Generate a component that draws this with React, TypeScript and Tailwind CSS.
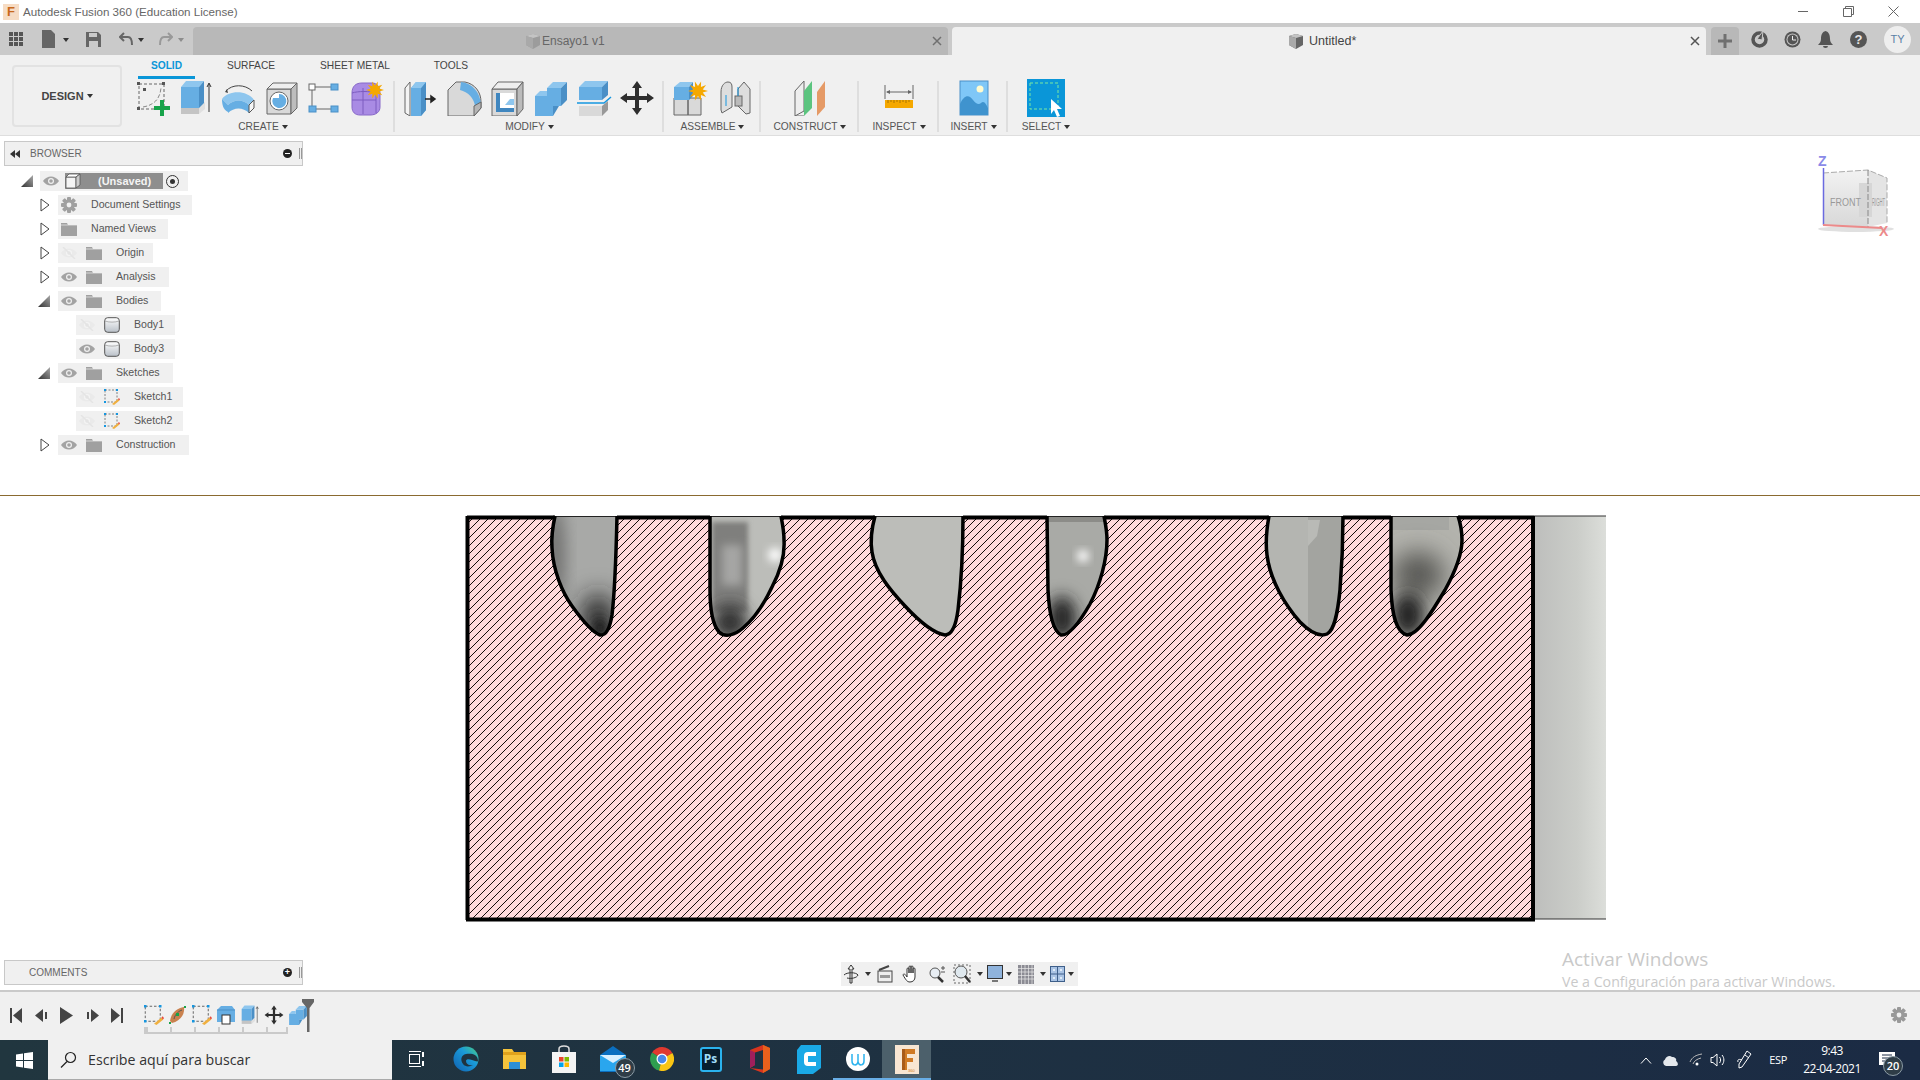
import type { ReactNode } from 'react';

const S = ({ s = 36, children }: { s?: number; children: ReactNode }) => (
  <svg width={s} height={s} viewBox="0 0 36 36" className="shrink-0">
    {children}
  </svg>
);

const B1 = '#66aee3';
const B2 = '#8ec6ee';
const B3 = '#4a8fc6';
const G1 = '#d9d9d9';
const LN = '#666';

/* ---------- ribbon icons ---------- */
const SketchIcon = ({ s = 36 }: { s?: number }) => (
  <S s={s}>
    <rect x="4" y="4" width="25" height="25" fill="none" stroke={LN} strokeWidth="1" strokeDasharray="3 2" />
    <path d="M8 27 C 20 25 25 18 26 8" fill="none" stroke="#888" strokeWidth="1" strokeDasharray="4 2" />
    {[[2, 2], [27, 2], [2, 27], [27, 27], [8, 8]].map(([x, y]) => (
      <rect key={`${x}-${y}`} x={x} y={y} width="3" height="3" fill="#555" />
    ))}
    <path d="M25 20h4v6h6v4h-6v6h-4v-6h-6v-4h6z" fill="#17a34a" />
  </S>
);
const ExtrudeIcon = ({ s = 36 }: { s?: number }) => (
  <S s={s}>
    <path d="M3 27V34H21V27z" fill="#c4c4c4" />
    <path d="M21 27 27 22V29L21 34z" fill="#e0e0e0" />
    <path d="M3 7V28H21V7z" fill={B1} />
    <path d="M3 7 8 1H26L21 7z" fill={B2} />
    <path d="M21 7 26 1V23L21 28z" fill={B3} />
    <path d="M31 32V4M29 7l2-4 2 4" fill="none" stroke="#333" strokeWidth="1" />
  </S>
);
const RevolveIcon = () => (
  <S>
    <path d="M5 11C11 4 24 4 31 11" fill="none" stroke="#444" strokeWidth="1" />
    <path d="M4 12l2-3 1 4z" fill="#444" />
    <path d="M1 19C8 10 26 10 33 20L28 25C22 19 13 19 7 25z" fill={B2} />
    <path d="M1 19C1 24 2 30 7 32V25z" fill={B1} />
    <path d="M7 25C13 19 22 19 28 25V33C22 27 13 27 7 33z" fill={B1} />
    <path d="M28 25 33 20V28L28 33z" fill="#f5f5f5" stroke="#555" strokeWidth="1" />
  </S>
);
const HoleIcon = () => (
  <S>
    <path d="M3 9V34H27V9z" fill={G1} stroke={LN} />
    <path d="M3 9 9 3H33L27 9z" fill="#efefef" stroke={LN} />
    <path d="M27 9 33 3V28L27 34z" fill="#bdbdbd" stroke={LN} />
    <circle cx="15" cy="21" r="9" fill="#fff" stroke={LN} />
    <path d="M15 14a7 7 0 1 1-6 4l6 0z" fill={B1} />
  </S>
);
const PatternIcon = () => (
  <S>
    <path d="M8 7H24M5 10V26M8 29H24" stroke={LN} strokeWidth="1" />
    <rect x="2" y="4" width="6" height="6" fill="#fff" stroke={LN} />
    <rect x="24" y="4" width="7" height="6" fill={B1} stroke={B3} />
    <rect x="2" y="26" width="7" height="6" fill={B1} stroke={B3} />
    <rect x="24" y="26" width="7" height="6" fill={B1} stroke={B3} />
  </S>
);
const StarBurst = ({ x, y, r = 8 }: { x: number; y: number; r?: number }) => {
  const pts: string[] = [];
  for (let i = 0; i < 20; i++) {
    const a = (i * Math.PI) / 10;
    const d = i % 2 ? r * 0.5 : r;
    pts.push(`${x + Math.cos(a) * d},${y + Math.sin(a) * d}`);
  }
  return <polygon points={pts.join(' ')} fill="#f5a800" />;
};
const FormIcon = () => (
  <S>
    <path d="M2 13C2 6 6 3 12 3H22C28 3 30 8 30 14V27C30 32 26 35 20 35H10C5 35 2 32 2 27z" fill="#a98be4" stroke="#8768c8" />
    <path d="M2 20H26M13 8V34M2 13C8 11 20 11 26 13M26 13V33" fill="none" stroke="#7c5cc0" strokeWidth="1" />
    <StarBurst x={25} y={10} r={9} />
  </S>
);
const PressPullIcon = () => (
  <S>
    <path d="M1 8 6 2V36L1 33z" fill="#f4f4f4" stroke={LN} />
    <path d="M7 8 12 2H22V30L17 36H7z" fill={B1} />
    <path d="M17 36V8L22 2V30z" fill={B3} />
    <path d="M7 8H17L22 2H12z" fill={B2} />
    <path d="M21 19H30M27 16l4 3-4 3z" stroke="#222" strokeWidth="1.5" fill="#222" />
  </S>
);
const FilletIcon = () => (
  <S>
    <path d="M1 36V10L9 2H18C28 4 34 12 34 22V28L27 36z" fill={G1} stroke={LN} />
    <path d="M14 2C25 3 33 12 34 24L28 26C27 18 21 12 13 10z" fill={B1} />
    <path d="M27 36V26L34 22V28z" fill="#b5b5b5" stroke={LN} />
  </S>
);
const ShellIcon = () => (
  <S>
    <path d="M2 9V36H27V9z" fill={G1} stroke={LN} />
    <path d="M2 9 8 2H33L27 9z" fill="#eee" stroke={LN} />
    <path d="M27 9 33 2V29L27 36z" fill="#bbb" stroke={LN} />
    <path d="M6 13H24V32H6z" fill="#fff" />
    <path d="M15 25 20 19H24V25z" fill={B2} />
    <path d="M6 13h4v15h14v4H6z" fill="#3f86bf" />
  </S>
);
const CombineIcon = ({ s = 36 }: { s?: number }) => (
  <S s={s}>
    <path d="M2 16V36H20V26H28V8H14V16z" fill={B1} />
    <path d="M14 8 20 2H34L28 8z" fill={B2} />
    <path d="M2 16 7 11H14V16z" fill={B2} />
    <path d="M28 8 34 2V20L28 26zM20 26 26 26 20 36z" fill={B3} />
  </S>
);
const SplitIcon = () => (
  <S>
    <path d="M3 7V20H26V7z" fill={B1} />
    <path d="M3 7 9 1H32L26 7z" fill={B2} />
    <path d="M26 7 32 1V15L26 20z" fill={B3} />
    <path d="M1 23H28L35 17" fill="none" stroke="#1596e0" strokeWidth="1.5" />
    <path d="M3 26V36H26V26z" fill={G1} />
    <path d="M26 26 32 21V30L26 36z" fill="#999" />
  </S>
);
const MoveIcon = ({ s = 36 }: { s?: number }) => (
  <S s={s}>
    <path d="M18 1 23 8H20V16H28V13L35 18 28 23V20H20V28H23L18 35 13 28H16V20H8V23L1 18 8 13V16H16V8H13z" fill="#2e2e2e" />
  </S>
);
const AssembleIcon = () => (
  <S>
    <path d="M1 18V35H15V18zM15 18V35H28V18z" fill={G1} stroke={LN} />
    <path d="M1 7V20H16V7z" fill={B1} />
    <path d="M1 7 7 2H20L16 7z" fill={B2} />
    <path d="M16 20V7L20 2V16z" fill={B3} />
    <StarBurst x={25} y={11} r={10} />
  </S>
);
const JointIcon = () => (
  <S>
    <path d="M4 12C4 5 8 2 11 2C14 2 15 4 15 7V27L5 33 4 30z" fill="#dedede" stroke={LN} />
    <path d="M21 9 27 2 33 9V33L29 34 21 26z" fill="#dedede" stroke={LN} />
    <rect x="18" y="16" width="7" height="10" fill="#bbb" stroke={LN} />
    <path d="M21 7V16M9 15V26" stroke="#1596e0" strokeWidth="1" />
  </S>
);
const ConstructIcon = () => (
  <S>
    <path d="M3 11 12 1V31L3 36z" fill="#eee" stroke={LN} />
    <path d="M12 36 3 36" stroke={LN} />
    <path d="M12 36V11L20 1V28z" fill="#5cc47f" />
    <path d="M25 12 33 1V27L25 36z" fill="#e59a66" />
  </S>
);
const InspectIcon = () => (
  <S>
    <path d="M4 5V19M32 5V19M6 12H30" stroke={LN} strokeWidth="1" fill="none" />
    <path d="M5 12l4-2v4zM31 12l-4-2v4z" fill={LN} />
    <rect x="4" y="20" width="28" height="8" fill="#f5a800" />
    <path d="M7 20v3M10 20v2M13 20v3M16 20v2M19 20v3M22 20v2M25 20v3M28 20v2" stroke="#8a6000" strokeWidth=".7" />
  </S>
);
const InsertIcon = () => (
  <svg width="30" height="36" viewBox="0 0 30 36" className="shrink-0">
    <rect x="1" y="1" width="28" height="34" fill="#7fc7f7" stroke="#4a90c8" />
    <circle cx="21" cy="9" r="3.5" fill="#fffbd0" />
    <path d="M1 35V24C5 15 10 14 14 20C17 24 20 25 22 23C25 20 27 24 29 28V35z" fill="#3f93ce" />
  </svg>
);
const SelectIcon = () => (
  <svg width="38" height="38" viewBox="0 0 38 38" className="shrink-0">
    <rect width="38" height="38" fill="#0a96d8" />
    <rect x="3" y="4" width="28" height="26" fill="none" stroke="#7de8a0" strokeWidth="1" strokeDasharray="3 2" />
    <path d="M24 20V35L27 31 30 38 33 37 30 30 35 30z" fill="#fff" />
  </svg>
);

/* ---------- browser icons ---------- */
const Eye = ({ off }: { off?: boolean }) => (
  <svg width="16" height="12" viewBox="0 0 16 12" className="shrink-0">
    <path d="M0 6C4 0 12 0 16 6C12 12 4 12 0 6z" fill={off ? '#eaeaea' : '#a3a3a3'} />
    <circle cx="8" cy="6" r="3" fill={off ? '#f4f4f4' : '#f0f0f0'} />
    <circle cx="8" cy="6" r="1.8" fill={off ? '#e4e4e4' : '#a3a3a3'} />
    {off && <path d="M2 0 14 12" stroke="#e4e4e4" strokeWidth="1.5" />}
  </svg>
);
const Folder = () => (
  <svg width="16" height="14" viewBox="0 0 16 14" className="shrink-0">
    <path d="M0 1H6L7 3H16V14H0z" fill="#a0a0a0" />
    <path d="M0 3H16" stroke="#eee" strokeWidth=".7" />
  </svg>
);
const Gear = ({ s = 16, c = '#a0a0a0' }: { s?: number; c?: string }) => (
  <svg width={s} height={s} viewBox="0 0 16 16" className="shrink-0">
    <g fill={c}>
      {[0, 45, 90, 135].map((a) => (
        <rect key={a} x="6" y="0" width="4" height="16" rx="1" transform={`rotate(${a} 8 8)`} />
      ))}
      <circle cx="8" cy="8" r="5.6" />
    </g>
    <circle cx="8" cy="8" r="2.4" fill="#f0f0f0" />
  </svg>
);
const BodyIcon = () => (
  <svg width="16" height="16" viewBox="0 0 16 16" className="shrink-0">
    <defs>
      <linearGradient id="bodyG" x1="0" x2="0" y1="0" y2="1">
        <stop offset="0" stopColor="#fff" />
        <stop offset="1" stopColor="#b9c0c8" />
      </linearGradient>
    </defs>
    <rect x=".7" y=".7" width="14.6" height="14.6" rx="3" fill="url(#bodyG)" stroke="#555" />
    <path d="M1 4C5 5.5 11 5.5 15 4" fill="none" stroke="#888" strokeWidth=".6" />
  </svg>
);
const SketchSmall = ({ s = 16 }: { s?: number }) => (
  <svg width={s} height={s} viewBox="0 0 16 16" className="shrink-0">
    <rect x="1" y="1" width="12" height="12" fill="none" stroke="#666" strokeWidth=".8" strokeDasharray="2 1.5" />
    {[[0, 0], [12, 0], [0, 12]].map(([x, y]) => (
      <rect key={`${x}${y}`} x={x} y={y} width="2" height="2" fill="#1596e0" />
    ))}
    <path d="M8 15 14 10l1.5 1.5L10 16z" fill="#f0b040" />
    <path d="M14 10l1-1 1 1.500-1 1z" fill="#e8483c" />
  </svg>
);
const TriRight = () => (
  <svg width="10" height="14" viewBox="0 0 10 14" className="shrink-0">
    <path d="M1 1 9 7 1 13z" fill="#fff" stroke="#444" strokeWidth="1" />
  </svg>
);
const TriDown = () => (
  <svg width="12" height="12" viewBox="0 0 12 12" className="shrink-0">
    <defs>
      <linearGradient id="triG" x1="0" x2="1" y1="1" y2="0">
        <stop offset="0" stopColor="#333" />
        <stop offset="1" stopColor="#aaa" />
      </linearGradient>
    </defs>
    <path d="M0 12 12 0V12z" fill="url(#triG)" />
  </svg>
);

type Row = {
  label: string;
  tri?: 'open' | 'closed';
  eye?: 'on' | 'off';
  icon: ReactNode;
  level: 1 | 2;
  width: string;
};

const rows: Row[] = [
  { label: 'Document Settings', tri: 'closed', icon: <Gear />, level: 1, width: 'w-[134px]' },
  { label: 'Named Views', tri: 'closed', icon: <Folder />, level: 1, width: 'w-[110px]' },
  { label: 'Origin', tri: 'closed', eye: 'off', icon: <Folder />, level: 1, width: 'w-[95px]' },
  { label: 'Analysis', tri: 'closed', eye: 'on', icon: <Folder />, level: 1, width: 'w-[111px]' },
  { label: 'Bodies', tri: 'open', eye: 'on', icon: <Folder />, level: 1, width: 'w-[103px]' },
  { label: 'Body1', eye: 'off', icon: <BodyIcon />, level: 2, width: 'w-[99px]' },
  { label: 'Body3', eye: 'on', icon: <BodyIcon />, level: 2, width: 'w-[99px]' },
  { label: 'Sketches', tri: 'open', eye: 'on', icon: <Folder />, level: 1, width: 'w-[115px]' },
  { label: 'Sketch1', eye: 'off', icon: <SketchSmall />, level: 2, width: 'w-[107px]' },
  { label: 'Sketch2', eye: 'off', icon: <SketchSmall />, level: 2, width: 'w-[107px]' },
  { label: 'Construction', tri: 'closed', eye: 'on', icon: <Folder />, level: 1, width: 'w-[131px]' },
];

function TreeRow({ row }: { row: Row }) {
  return (
    <div className="flex h-[24px] items-center">
      <div className={row.level === 1 ? 'flex w-[54px] justify-end pr-[8px]' : 'w-[72px]'}>
        {row.tri === 'closed' && <TriRight />}
        {row.tri === 'open' && <TriDown />}
      </div>
      <div className={`flex h-[20px] items-center bg-[#f0f0f0] pl-[3px] ${row.width}`}>
        {row.eye && (
          <div className="mr-[9px]">
            <Eye off={row.eye === 'off'} />
          </div>
        )}
        <div className="flex w-[16px] justify-center">{row.icon}</div>
        <span className="ml-[14px] whitespace-nowrap text-[10.6px] text-[#555]">{row.label}</span>
      </div>
    </div>
  );
}

function PanelHandle() {
  return <span className="h-[11px] w-[3px] border-x border-[#999]" />;
}

function BrowserPanel() {
  return (
    <div className="absolute left-[4px] top-[5px] w-[299px]">
      <div className="flex h-[25px] items-center border border-[#c8c8c8] bg-[#f0f0f0] pl-[5px]">
        <svg width="10" height="8" viewBox="0 0 10 8">
          <path d="M5 0V8L0 4zM10 0V8L5 4z" fill="#333" />
        </svg>
        <span className="ml-[10px] text-[10px] text-[#666]">BROWSER</span>
        <span className="ml-auto mr-[7px] flex h-[9px] w-[9px] items-center justify-center rounded-full bg-[#222]">
          <span className="h-[1.500px] w-[5px] bg-white" />
        </span>
        <PanelHandle />
      </div>
      <div className="mt-[3px] flex h-[24px] items-center">
        <div className="flex w-[36px] justify-end pr-[7px]">
          <TriDown />
        </div>
        <div className="flex h-[20px] w-[148px] items-center bg-[#f0f0f0] pl-[3px]">
          <Eye />
          <div className="ml-[6px] flex h-[16px] w-[98px] items-center bg-[#8e8e8e]">
            <svg width="16" height="16" viewBox="0 0 16 16" className="shrink-0">
              <path d="M1 4V15H11V4z" fill="#f4f4f4" stroke="#555" strokeWidth=".8" />
              <path d="M1 4 4 1H15L11 4z" fill="#fff" stroke="#555" strokeWidth=".8" />
              <path d="M11 4 15 1V12L11 15z" fill="#ccc" stroke="#555" strokeWidth=".8" />
            </svg>
            <span className="ml-[17px] text-[11px] font-bold text-[#f4f4f4]">(Unsaved)</span>
          </div>
          <span className="ml-[3px] flex h-[13px] w-[13px] items-center justify-center rounded-full border border-[#333]">
            <span className="h-[5px] w-[5px] rounded-full bg-[#333]" />
          </span>
        </div>
      </div>
      {rows.map((r) => (
        <TreeRow key={r.label} row={r} />
      ))}
    </div>
  );
}

/* ---------- ribbon ---------- */
function Caret() {
  return <span className="ml-[3px] inline-block border-x-[3px] border-t-[4px] border-x-transparent border-t-[#333] align-middle" />;
}

function Group({ width, label, icons, pad, last }: { width: string; label: string; icons: ReactNode; pad: string; last?: boolean }) {
  return (
    <div className={`relative flex h-[56px] flex-col ${width}`}>
      <div className={`flex h-[38px] items-center ${pad}`}>{icons}</div>
      <div className="mt-[2px] whitespace-nowrap text-center text-[10.2px] leading-[16px] text-[#555]">
        {label}
        <Caret />
      </div>
      {!last && <span className="absolute bottom-[3px] right-0 top-[2px] w-[2px] bg-[#dedede]" />}
    </div>
  );
}

const Slot = ({ w = 'w-[43px]', children }: { w?: string; children: ReactNode }) => (
  <div className={`flex justify-center ${w}`}>{children}</div>
);

function Ribbon() {
  return (
    <div className="flex h-[81px] border-b border-[#dedede] bg-[#f0f0f0]">
      <div className="w-[131px] pl-[12px] pt-[10px]">
        <div className="flex h-[62px] w-[110px] items-center justify-center rounded-[4px] border-2 border-[#e2e2e2] text-[11px] font-bold text-[#444]">
          DESIGN
          <Caret />
        </div>
      </div>
      <div className="flex flex-col">
        <div className="flex h-[24px] text-[10.2px] text-[#444]">
          <div className="ml-[7px] flex h-[24px] w-[57px] items-center justify-center border-b-[3px] border-[#0a96d8] pt-[1px] font-bold text-[#0a96d8]">
            SOLID
          </div>
          <div className="flex w-[112px] items-center justify-center pb-[2px]">SURFACE</div>
          <div className="flex w-[96px] items-center justify-center pb-[2px]">SHEET METAL</div>
          <div className="flex w-[96px] items-center justify-center pb-[2px]">TOOLS</div>
        </div>
        <div className="flex">
          <Group
            width="w-[264px]"
            label="CREATE"
            pad=""
            icons={
              <>
                <Slot><SketchIcon /></Slot>
                <Slot><ExtrudeIcon /></Slot>
                <Slot><RevolveIcon /></Slot>
                <Slot><HoleIcon /></Slot>
                <Slot><PatternIcon /></Slot>
                <Slot><FormIcon /></Slot>
              </>
            }
          />
          <Group
            width="w-[269px]"
            label="MODIFY"
            pad="pl-[5px]"
            icons={
              <>
                <Slot><PressPullIcon /></Slot>
                <Slot><FilletIcon /></Slot>
                <Slot><ShellIcon /></Slot>
                <Slot><CombineIcon /></Slot>
                <Slot><SplitIcon /></Slot>
                <Slot><MoveIcon /></Slot>
              </>
            }
          />
          <Group
            width="w-[97px]"
            label="ASSEMBLE"
            pad="pl-[4px]"
            icons={
              <>
                <Slot w="w-[45px]"><AssembleIcon /></Slot>
                <Slot w="w-[43px]"><JointIcon /></Slot>
              </>
            }
          />
          <Group width="w-[98px]" label="CONSTRUCT" pad="justify-center" icons={<ConstructIcon />} />
          <Group width="w-[80px]" label="INSPECT" pad="justify-center" icons={<InspectIcon />} />
          <Group width="w-[69px]" label="INSERT" pad="justify-center" icons={<InsertIcon />} />
          <Group width="w-[76px]" label="SELECT" pad="justify-center" icons={<SelectIcon />} last />
        </div>
      </div>
    </div>
  );
}

/* ---------- tab bar ---------- */
const DocCube = ({ c = '#8a8a8a' }: { c?: string }) => (
  <svg width="16" height="16" viewBox="0 0 16 16" className="shrink-0">
    <path d="M1 3 8 1 15 3V12L8 16 1 12z" fill={c} />
    <path d="M1 3 8 5 15 3 8 1z" fill="#c4c4c4" />
    <path d="M8 5V16L1 12V3z" fill="#a9a9a9" />
  </svg>
);
const TabX = ({ c }: { c: string }) => (
  <svg width="10" height="10" viewBox="0 0 10 10" className="shrink-0">
    <path d="M1 1 9 9M9 1 1 9" stroke={c} strokeWidth="1.500" />
  </svg>
);

function TabBar() {
  return (
    <div className="flex h-[32px] bg-[#cacaca] pt-[4px]">
      <div className="flex w-[193px] items-center">
        <svg width="14" height="14" viewBox="0 0 14 14" className="ml-[9px] mt-[-4px]">
          <g fill="#555">
            {[0, 5, 10].flatMap((x) => [0, 5, 10].map((y) => <rect key={`${x}${y}`} x={x} y={y} width="4" height="4" />))}
          </g>
        </svg>
        <svg width="14" height="18" viewBox="0 0 14 18" className="ml-[19px] mt-[-4px]">
          <path d="M0 0H9L13 4V18H0z" fill="#666" />
        </svg>
        <span className="ml-[4px] mt-[-4px]"><Caret /></span>
        <svg width="15" height="15" viewBox="0 0 15 15" className="ml-[17px] mt-[-4px]">
          <path d="M0 0H12L15 3V15H0z" fill="#666" />
          <rect x="3" y="1" width="8" height="4" fill="#cacaca" />
          <rect x="3" y="9" width="9" height="6" fill="#cacaca" />
        </svg>
        <svg width="14" height="14" viewBox="0 0 14 14" className="ml-[18px] mt-[-4px]">
          <path d="M5 1 1 5l4 4M1 5H9C12 5 13 8 13 13" fill="none" stroke="#666" strokeWidth="2" />
        </svg>
        <span className="ml-[2px] mt-[-4px]"><Caret /></span>
        <svg width="14" height="14" viewBox="0 0 14 14" className="ml-[15px] mt-[-4px]">
          <path d="M9 1l4 4-4 4M13 5H5C2 5 1 8 1 13" fill="none" stroke="#999" strokeWidth="2" />
        </svg>
        <span className="ml-[2px] mt-[-4px] opacity-40"><Caret /></span>
      </div>
      <div className="flex w-[755px] items-center rounded-t-[4px] bg-[#b8b8b8] pl-[332px] pr-[6px]">
        <DocCube c="#9c9c9c" />
        <span className="ml-[1px] text-[12px] text-[#666]">Ensayo1 v1</span>
        <span className="ml-auto">
          <TabX c="#707070" />
        </span>
      </div>
      <div className="ml-[4px] flex w-[754px] items-center rounded-t-[4px] bg-[#f0f0f0] pl-[336px] pr-[6px]">
        <DocCube c="#666" />
        <span className="ml-[5px] text-[12.500px] text-[#444]">Untitled*</span>
        <span className="ml-auto">
          <TabX c="#555" />
        </span>
      </div>
      <div className="ml-[5px] flex w-[28px] items-center justify-center rounded-t-[4px] bg-[#b8b8b8]">
        <svg width="14" height="14" viewBox="0 0 14 14">
          <path d="M5.500 0h3v5.500H14v3H8.500V14h-3V8.500H0v-3h5.500z" fill="#707070" />
        </svg>
      </div>
      <div className="flex flex-1 items-center pb-[4px]">
        <svg width="17" height="17" viewBox="0 0 17 17" className="ml-[12px]">
          <circle cx="8.500" cy="8.500" r="6.500" fill="none" stroke="#555" strokeWidth="3.500" />
          <path d="M12 0 6 8l5 1z" fill="#555" stroke="#cacaca" strokeWidth="1" />
        </svg>
        <svg width="17" height="17" viewBox="0 0 17 17" className="ml-[16px]">
          <circle cx="8.500" cy="8.500" r="8" fill="#555" />
          <circle cx="8.500" cy="8.500" r="6" fill="#cacaca" />
          <circle cx="8.500" cy="8.500" r="5" fill="#555" />
          <path d="M8.500 5V9H12" fill="none" stroke="#eee" strokeWidth="1" />
        </svg>
        <svg width="15" height="17" viewBox="0 0 15 17" className="ml-[17px]">
          <path d="M7.500 0C11 1 12 4 12 8C12 11 13.500 12 15 14H0C1.500 12 3 11 3 8C3 4 4 1 7.500 0z" fill="#555" />
          <path d="M5 15h5a2.500 2 0 0 1-5 0z" fill="#555" />
        </svg>
        <span className="ml-[17px] flex h-[17px] w-[17px] items-center justify-center rounded-full bg-[#555] text-[13px] font-bold leading-none text-[#e6e6e6]">?</span>
        <span className="ml-[17px] flex h-[27px] w-[27px] items-center justify-center rounded-full bg-[#eeeeee] text-[11px] text-[#5b7fa6]">TY</span>
      </div>
    </div>
  );
}

/* ---------- canvas drawing ---------- */
const notches = [
  'M555 516C553 525 551 535 552 548C553 570 562 592 572 606C582 620 592 632 600 635C606 636 610 628 612 615C615 590 616 560 617 516',
  'M710 516L710 590C710 610 713 625 719 632C725 638 735 635 743 628C755 618 765 602 772 587C780 572 785 555 784 540C784 530 782 522 781 516',
  'M875 516C872 527 870 540 872 552C875 572 890 590 905 606C918 620 932 633 945 635C952 635 956 625 958 610C961 585 963 550 963 516',
  'M1047 516L1048 590C1049 612 1052 630 1061 635C1070 636 1082 618 1090 604C1100 585 1107 560 1107 540C1107 530 1105 522 1104 516',
  'M1269 516C1267 527 1265 540 1267 555C1270 580 1285 605 1300 622C1310 632 1320 637 1327 634C1335 630 1338 610 1340 590C1342 565 1343 540 1343 516',
  'M1391 516L1391 590C1392 615 1396 632 1407 635C1418 635 1432 612 1445 590C1455 572 1462 555 1462 540C1462 530 1460 522 1458 516',
];

function Part() {
  return (
    <svg width="1920" height="854" viewBox="0 136 1920 854" className="absolute left-0 top-0">
      <defs>
        <pattern id="hatch" x="467" y="516" width="8" height="8" patternUnits="userSpaceOnUse">
          <rect width="8" height="8" fill="#ffd9dc" />
          {[0, 1, 2, 3, 4, 5, 6, 7].map((i) => (
            <rect key={i} x={i} y={7 - i} width="1" height="1" fill="#140a0a" shapeRendering="crispEdges" />
          ))}
        </pattern>
        <linearGradient id="sideG" x1="0" x2="1" y1="0" y2="0">
          <stop offset="0" stopColor="#bdbebc" />
          <stop offset=".6" stopColor="#cbcdc9" />
          <stop offset="1" stopColor="#dcdeda" />
        </linearGradient>
        <filter id="b12" x="-60%" y="-60%" width="220%" height="220%"><feGaussianBlur stdDeviation="12" /></filter>
        <filter id="b8" x="-60%" y="-60%" width="220%" height="220%"><feGaussianBlur stdDeviation="8" /></filter>
        <filter id="b4" x="-40%" y="-40%" width="180%" height="180%"><feGaussianBlur stdDeviation="4" /></filter>
        <filter id="b2" x="-40%" y="-40%" width="180%" height="180%"><feGaussianBlur stdDeviation="2.500" /></filter>
        {notches.map((d, i) => (
          <clipPath id={`n${i}`} key={d}>
            <path d={d} />
          </clipPath>
        ))}
      </defs>

      <path d="M0 495.500H1920" stroke="#8a6a30" strokeWidth="1" />
      <rect x="1534" y="516" width="72" height="403" fill="url(#sideG)" />
      <path d="M1534 516H1606M1534 919H1606" stroke="#333" strokeWidth="1" />
      <rect x="467" y="516" width="1067" height="403" fill="url(#hatch)" />

      <g clipPath="url(#n0)">
        <rect x="545" y="510" width="80" height="130" fill="#a8a9a7" />
        <ellipse cx="555" cy="555" rx="10" ry="50" fill="#6f706e" filter="url(#b8)" />
        <ellipse cx="598" cy="618" rx="16" ry="24" fill="#222" filter="url(#b12)" />
        <ellipse cx="600" cy="628" rx="8" ry="10" fill="#222" filter="url(#b4)" />
      </g>
      <g clipPath="url(#n1)">
        <rect x="705" y="510" width="85" height="130" fill="#bcbdb9" />
        <rect x="712" y="522" width="36" height="90" fill="#7f7f7d" filter="url(#b2)" />
        <rect x="722" y="545" width="20" height="40" fill="#a6a6a4" filter="url(#b4)" />
        <ellipse cx="730" cy="622" rx="18" ry="18" fill="#333" filter="url(#b8)" />
        <circle cx="775" cy="555" r="7" fill="#fff" filter="url(#b4)" />
      </g>
      <g clipPath="url(#n2)">
        <rect x="865" y="510" width="105" height="130" fill="#bcbdb9" />
      </g>
      <g clipPath="url(#n3)">
        <rect x="1040" y="510" width="75" height="130" fill="#a9aaa6" />
        <rect x="1047" y="516" width="60" height="6" fill="#8c8c88" />
        <ellipse cx="1062" cy="618" rx="14" ry="22" fill="#222" filter="url(#b8)" />
        <circle cx="1083" cy="556" r="6" fill="#fff" filter="url(#b4)" />
      </g>
      <g clipPath="url(#n4)">
        <rect x="1260" y="510" width="50" height="130" fill="#b4b5b1" />
        <rect x="1308" y="510" width="40" height="130" fill="#a3a4a0" />
        <path d="M1308 520h12l-3 16-9 10z" fill="#b9bab6" />
      </g>
      <g clipPath="url(#n5)">
        <rect x="1385" y="510" width="85" height="130" fill="#b3b3ad" />
        <rect x="1391" y="516" width="58" height="14" fill="#a6a7a3" />
        <ellipse cx="1418" cy="575" rx="26" ry="24" fill="#5a5a56" filter="url(#b12)" />
        <ellipse cx="1408" cy="615" rx="16" ry="22" fill="#222" filter="url(#b8)" />
      </g>

      <path d="M467 517.500H555M617 517.500H710M781 517.500H875M963 517.500H1047M1104 517.500H1269M1343 517.500H1391M1458 517.500H1534" stroke="#000" strokeWidth="4" />
      <path d="M555 516.500H617M710 516.500H781M875 516.500H963M1047 516.500H1104M1269 516.500H1343M1391 516.500H1458" stroke="#222" strokeWidth="1" />
      <path d="M467.500 516V920M1533 516V920M466 919.500H1535" fill="none" stroke="#000" strokeWidth="4" />
      {notches.map((d) => (
        <path key={d} d={d} fill="none" stroke="#000" strokeWidth="3.500" />
      ))}
    </svg>
  );
}

function ViewCube() {
  return (
    <svg width="100" height="95" viewBox="0 0 100 95" className="absolute right-[10px] top-[12px]">
      <defs>
        <linearGradient id="cubeG" x1="0" x2="0" y1="0" y2="1">
          <stop offset="0" stopColor="#f2f2f2" />
          <stop offset="1" stopColor="#d8d8d8" />
        </linearGradient>
      </defs>
      <ellipse cx="46" cy="81" rx="38" ry="3" fill="#ccc" opacity=".6" />
      <path d="M13 25 58 22V79L13 77z" fill="url(#cubeG)" />
      <path d="M58 22 77 30V75L58 79z" fill="#e4e4e4" />
      <rect x="49" y="35" width="13" height="34" fill="#d6d6d6" />
      <path d="M13 25 58 22 77 30V75" fill="none" stroke="#aaa" strokeWidth="1" strokeDasharray="6 2" />
      <path d="M58 22V79" stroke="#888" strokeWidth="1" strokeDasharray="6 2" />
      <text x="20" y="58" fontSize="11" textLength="31" lengthAdjust="spacingAndGlyphs" fill="#999" fontFamily="Liberation Sans">FRONT</text>
      <text x="62" y="58" fontSize="10" textLength="13" lengthAdjust="spacingAndGlyphs" fill="#999" fontFamily="Liberation Sans">RIGHT</text>
      <path d="M13.500 20V77" stroke="#6a6ae0" strokeWidth="1.500" />
      <path d="M13 77 72 80" stroke="#ec8a8a" strokeWidth="2" />
      <text x="8" y="18" fontSize="14" fontWeight="bold" fill="#8a8ae8" fontFamily="Liberation Sans">Z</text>
      <text x="69" y="88" fontSize="14" fontWeight="bold" fill="#ec8a8a" fontFamily="Liberation Sans">X</text>
    </svg>
  );
}

const NavCaret = () => <span className="block h-0 w-0 shrink-0 border-x-[3px] border-t-[4px] border-x-transparent border-t-[#333]" />;
const NavSlot = ({ w, children }: { w: string; children: ReactNode }) => <div className={`flex shrink-0 justify-center ${w}`}>{children}</div>;

function NavBar() {
  const dark = '#444';
  return (
    <div className="absolute bottom-[4px] left-[841px] flex h-[24px] w-[237px] items-center bg-[#f0f0f0]">
      <NavSlot w="w-[20px]">
        <svg width="18" height="20" viewBox="0 0 18 20">
          <path d="M9 1 12 5H10V19H8V5H6zM2 11C5 8 14 8 16 11C15 14 9 15 5 14" fill="none" stroke="#333" strokeWidth="1" />
        </svg>
      </NavSlot>
      <NavSlot w="w-[14px]"><NavCaret /></NavSlot>
      <NavSlot w="w-[20px]">
        <svg width="16" height="18" viewBox="0 0 16 18">
          <rect x="1" y="6" width="14" height="11" fill="#eee" stroke={dark} />
          <rect x="3" y="10" width="10" height="3" fill="#999" />
          <path d="M2 5 12 1" stroke={dark} strokeWidth="2" />
        </svg>
      </NavSlot>
      <NavSlot w="w-[32px]">
        <svg width="18" height="20" viewBox="0 0 18 20">
          <path d="M5 11V5a1 1 0 0 1 2 0V9V3a1 1 0 0 1 2 0V9V3a1 1 0 0 1 2 0V9V5a1 1 0 0 1 2 0V13C13 16 11 18 8 18C5 18 4 16 1 11C1 10 3 9 5 13z" fill="#fff" stroke="#333" strokeWidth="1" />
        </svg>
      </NavSlot>
      <NavSlot w="w-[20px]">
        <svg width="18" height="18" viewBox="0 0 18 18">
          <circle cx="7" cy="8" r="5" fill="#e8eef4" stroke="#555" />
          <path d="M10 12 15 17" stroke="#333" strokeWidth="2.500" />
          <path d="M13 3h4M15 1v4M13 7h4" stroke="#555" strokeWidth="1" />
        </svg>
      </NavSlot>
      <NavSlot w="w-[30px]">
        <svg width="18" height="20" viewBox="0 0 18 20">
          <rect x="1" y="1" width="16" height="18" fill="none" stroke="#666" strokeDasharray="2 2" />
          <circle cx="8" cy="8" r="6" fill="#dfe8ee" stroke="#555" />
          <path d="M12 12 17 18" stroke="#333" strokeWidth="2.500" />
        </svg>
      </NavSlot>
      <NavSlot w="w-[6px]"><NavCaret /></NavSlot>
      <NavSlot w="w-[23px]">
        <svg width="16" height="18" viewBox="0 0 16 18">
          <rect x=".5" y=".5" width="15" height="13" fill="#8fb3dc" stroke="#333" />
          <path d="M5 15h6v2H5z" fill="#777" />
        </svg>
      </NavSlot>
      <NavSlot w="w-[6px]"><NavCaret /></NavSlot>
      <NavSlot w="w-[28px]">
        <svg width="16" height="19" viewBox="0 0 16 19">
          <rect width="16" height="19" fill="#8c8c94" />
          <path d="M3.500 0V19M7 0V19M10.500 0V19M14 0V19M0 3.500H16M0 7H16M0 10.500H16M0 14H16" stroke="#e8e8e8" strokeWidth=".7" />
        </svg>
      </NavSlot>
      <NavSlot w="w-[6px]"><NavCaret /></NavSlot>
      <NavSlot w="w-[22px]">
        <svg width="15" height="16" viewBox="0 0 15 16">
          <rect x=".5" y=".5" width="14" height="15" fill="#a9c3e4" stroke="#3e5f8a" />
          <path d="M7.500 0V16M0 8H15" stroke="#3e5f8a" />
          <path d="M3 3h2v2H3zM10 3h2v2h-2zM3 11h2v2H3zM10 11h2v2h-2z" fill="#e0ecf8" />
        </svg>
      </NavSlot>
      <NavSlot w="w-[6px]"><NavCaret /></NavSlot>
    </div>
  );
}

/* ---------- timeline ---------- */
function Timeline() {
  return (
    <div className="flex h-[50px] items-center border-t-2 border-[#cacaca] bg-[#f0f0f0]">
      <div className="flex w-[140px] items-center justify-between pb-[2px] pl-[10px] pr-[17px]">
        <svg width="12" height="15" viewBox="0 0 12 15"><path d="M0 0h2v15H0zM12 0V15L3 7.500z" fill="#444" /></svg>
        <svg width="13" height="13" viewBox="0 0 13 13"><path d="M8 0V13L0 6.500zM10 3h2v7h-2z" fill="#444" /></svg>
        <svg width="13" height="17" viewBox="0 0 13 17"><path d="M0 0V17L13 8.500z" fill="#444" /></svg>
        <svg width="13" height="13" viewBox="0 0 13 13"><path d="M5 0V13L13 6.500zM1 3h2v7H1z" fill="#444" /></svg>
        <svg width="12" height="15" viewBox="0 0 12 15"><path d="M10 0h2v15h-2zM0 0V15L9 7.500z" fill="#444" /></svg>
      </div>
      <div className="relative flex h-[48px] w-[170px] pl-[4px]">
        <div className="flex h-[46px] flex-col">
          <div className="mt-[13px] flex items-center gap-[4px]">
            <SketchSmall s={20} />
            <svg width="20" height="20" viewBox="0 0 20 20">
              <path d="M2 16C3 8 9 3 16 2C17 10 12 16 4 18z" fill="#c9814e" />
              <path d="M6 14C7 9 11 6 14 5" stroke="#555" fill="none" />
              <rect x="8" y="8" width="3" height="3" fill="#17a34a" />
              <rect x="16" y="1" width="2" height="2" fill="#17a34a" /><rect x="1" y="17" width="2" height="2" fill="#17a34a" />
            </svg>
            <SketchSmall s={20} />
            <svg width="20" height="20" viewBox="0 0 20 20">
              <path d="M1 5 5 1H16L19 5V17H1z" fill={B1} />
              <path d="M1 5H19" stroke={B3} />
              <rect x="6" y="10" width="8" height="9" fill="#fff" stroke="#333" />
            </svg>
            <ExtrudeIcon s={20} />
            <MoveIcon s={20} />
            <CombineIcon s={20} />
          </div>
          <div className="mt-[2px] h-[7px] w-[144px] border-x-2 border-b-2 border-[#cacaca] bg-[linear-gradient(90deg,#cacaca_2px,transparent_2px)] bg-[length:24px_5px]" />
        </div>
        <svg width="14" height="34" viewBox="0 0 14 34" className="absolute left-[162px] top-[7px]">
          <path d="M0 0H12V3L7.500 9V33H5V9L0 3z" fill="#666" />
        </svg>
      </div>
      <div className="ml-auto mr-[13px] pb-[2px]">
        <Gear s={16} c="#999" />
      </div>
    </div>
  );
}

/* ---------- taskbar ---------- */
const TaskSlot = ({ children, active, open }: { children: ReactNode; active?: boolean; open?: boolean }) => (
  <div
    className={`flex h-[40px] w-[49px] items-center justify-center border-b-[2px] ${
      active ? 'border-[#69aee6] bg-[#4c606b]' : open ? 'border-[#69aee6]' : 'border-transparent'
    }`}
  >
    {children}
  </div>
);

function Taskbar() {
  return (
    <div className="flex h-[40px] items-center bg-linear-to-r from-[#21363f] to-[#1b2b44] font-['Open_Sans',sans-serif]">
      <div className="flex w-[48px] justify-center">
        <svg width="17" height="17" viewBox="0 0 17 17">
          <path d="M0 2.500 7 1.500V8H0zM8 1.300 17 0V8H8zM0 9H7V15.500L0 14.500zM8 9H17V17L8 15.700z" fill="#fff" />
        </svg>
      </div>
      <div className="flex h-[40px] w-[344px] items-center border-b border-[#aaa] bg-[#f0f0f0] pl-[12px]">
        <svg width="17" height="17" viewBox="0 0 17 17">
          <circle cx="10.500" cy="6.500" r="5" fill="none" stroke="#222" strokeWidth="1.200" />
          <path d="M7 10.500 1 16.500" stroke="#222" strokeWidth="1.200" />
        </svg>
        <span className="ml-[11px] text-[14.200px] text-[#333]">Escribe aquí para buscar</span>
      </div>
      <div className="flex">
        <TaskSlot>
          <svg width="16" height="16" viewBox="0 0 16 16">
            <path d="M0 .500H12M0 15.500H12" stroke="#fff" />
            <rect x=".5" y="3.500" width="10" height="9" fill="none" stroke="#fff" />
            <path d="M13 1h2v5h-2zM13 10h2v5h-2z" fill="#fff" />
          </svg>
        </TaskSlot>
        <TaskSlot>
          <svg width="26" height="26" viewBox="0 0 26 26">
            <defs>
              <linearGradient id="edgeG" x1="0" x2="1" y1="1" y2="0">
                <stop offset="0" stopColor="#1060b0" />
                <stop offset=".6" stopColor="#1a9ad8" />
                <stop offset="1" stopColor="#4cd080" />
              </linearGradient>
            </defs>
            <circle cx="13" cy="13" r="12.500" fill="url(#edgeG)" />
            <path d="M25 15C25 8 18 7 13 8C8 9 7 14 10 18C13 22 18 20 20 19C16 20 13 18 13 15C13 13 16 13 19 14C22 15 25 16 25 15z" fill="#1f3340" />
          </svg>
        </TaskSlot>
        <TaskSlot>
          <svg width="23" height="20" viewBox="0 0 23 20">
            <path d="M0 0H9L11 3H23V20H0z" fill="#f5c33b" />
            <path d="M0 3H23V6H0z" fill="#e0a21c" />
            <rect x="6" y="13" width="11" height="7" fill="#2d8fd6" />
          </svg>
        </TaskSlot>
        <TaskSlot>
          <svg width="24" height="28" viewBox="0 0 24 28">
            <path d="M7 8V4C7 0 17 0 17 4V8" fill="none" stroke="#ddd" strokeWidth="1.500" />
            <rect y="7" width="24" height="21" fill="#f4f4f4" />
            <rect x="7" y="12" width="4.500" height="4.500" fill="#e8452c" />
            <rect x="12.500" y="12" width="4.500" height="4.500" fill="#7fba00" />
            <rect x="7" y="17.500" width="4.500" height="4.500" fill="#00a4ef" />
            <rect x="12.500" y="17.500" width="4.500" height="4.500" fill="#ffb900" />
          </svg>
        </TaskSlot>
        <TaskSlot>
          <div className="relative">
            <svg width="26" height="26" viewBox="0 0 26 26">
              <path d="M13 0 26 9V26H0V9z" fill="#0b6fc0" />
              <path d="M0 9H26V25H0z" fill="#2aa6ee" />
              <path d="M0 9 13 17 26 9" fill="#d9f0ff" />
            </svg>
            <span className="absolute bottom-[-6px] right-[-9px] flex h-[20px] w-[20px] items-center justify-center rounded-full border border-[#8a9aa4] bg-[#2f3d47] text-[11px] font-semibold text-white">49</span>
          </div>
        </TaskSlot>
        <TaskSlot>
          <svg width="24" height="24" viewBox="0 0 24 24">
            <path d="M12 12 22.400 6A12 12 0 0 0 2 5.500z" fill="#e0392f" />
            <path d="M12 12 2 5.500A12 12 0 0 0 9 23.600z" fill="#2e9e4f" />
            <path d="M12 12 9 23.600A12 12 0 0 0 22.400 6z" fill="#f9c513" />
            <circle cx="12" cy="12" r="5.500" fill="#fff" />
            <circle cx="12" cy="12" r="4.300" fill="#4a89e8" />
          </svg>
        </TaskSlot>
        <TaskSlot>
          <div className="flex h-[25px] w-[22px] items-center justify-center rounded-[3px] border-2 border-[#2bb3ee] bg-[#071e2e] text-[12px] font-bold text-[#9fdcf8]">Ps</div>
        </TaskSlot>
        <TaskSlot>
          <svg width="20" height="28" viewBox="0 0 20 28">
            <path d="M0 5 13 0 20 3V24L13 28 0 23 13 24.500V5L5 7.500V20L0 23z" fill="#d8341e" />
            <path d="M13 0 20 3V24L13 28z" fill="#e8601c" />
            <path d="M0 5 5 7.500V20L0 23z" fill="#a01f5c" />
          </svg>
        </TaskSlot>
        <TaskSlot>
          <svg width="24" height="29" viewBox="0 0 24 29">
            <path d="M4 0H24V23L16 29H0V5z" fill="#1aa9e6" />
            <path d="M19 9H11A2 2 0 0 0 9 11V17A2 2 0 0 0 11 19H19" fill="none" stroke="#fff" strokeWidth="4" />
          </svg>
        </TaskSlot>
        <TaskSlot open>
          <svg width="24" height="24" viewBox="0 0 24 24">
            <circle cx="12" cy="12" r="12" fill="#fff" />
            <path d="M6 7V14C6 19 11 19 12 15C13 19 18 19 18 14V7" fill="none" stroke="#2bb3ee" strokeWidth="1.500" />
            <path d="M12 7V15" stroke="#2bb3ee" strokeWidth="1.500" />
          </svg>
        </TaskSlot>
        <TaskSlot active>
          <svg width="24" height="29" viewBox="0 0 24 29">
            <rect width="24" height="29" fill="#f8e6d2" />
            <path d="M7 4H20V9H12V13H18V17H12V25H7z" fill="#d07a24" />
            <path d="M7 4H10V25H7z" fill="#a85a18" />
            <text x="13" y="27" fontSize="4" fill="#d07a24" fontFamily="Liberation Sans">360</text>
          </svg>
        </TaskSlot>
      </div>
      <div className="ml-auto flex items-center pr-[12px] text-white">
        <svg width="12" height="7" viewBox="0 0 12 7"><path d="M1 6.500 6 1l5 5.500" fill="none" stroke="#fff" strokeWidth="1" /></svg>
        <svg width="17" height="11" viewBox="0 0 17 11" className="ml-[10px]">
          <path d="M4 11A3.500 3.500 0 0 1 3 4.500C4 1 8 0 10 2C13 2 15 4 14 6C16 7 17 11 14 11z" fill="#e4e8ec" />
        </svg>
        <svg width="14" height="14" viewBox="0 0 14 14" className="ml-[10px]">
          <path d="M1 9C3 4 7 2 13 1M4 11C5 8 8 6 12 5" fill="none" stroke="#bbb" strokeWidth="1" />
          <circle cx="8" cy="11" r="1.500" fill="#fff" />
        </svg>
        <svg width="16" height="16" viewBox="0 0 16 16" className="ml-[7px]">
          <path d="M1 5.500H3L7 2V14L3 10.500H1z" fill="none" stroke="#fff" strokeWidth="1" />
          <path d="M9.500 5C11 7 11 9 9.500 11M12 3C14.500 6 14.500 10 12 13" fill="none" stroke="#fff" strokeWidth="1" />
        </svg>
        <svg width="16" height="20" viewBox="0 0 16 20" className="ml-[11px]">
          <path d="M10 1 14 4 5 17 2 18 2 14zM8 5 12 8M1 12C0 9 3 9 5 10" fill="none" stroke="#fff" strokeWidth="1" />
        </svg>
        <span className="ml-[16px] text-[11px] tracking-[-0.3px] text-white">ESP</span>
        <div className="ml-[15px] flex w-[60px] flex-col items-center text-[12px] leading-[18px] tracking-[-0.5px]">
          <span>9:43</span>
          <span>22-04-2021</span>
        </div>
        <div className="relative ml-[17px] mr-[13px]">
          <svg width="16" height="16" viewBox="0 0 16 16"><path d="M0 0H16V13H0z" fill="#fff" /><path d="M3 3H13M3 6H13M3 9H13" stroke="#1b2b44" /></svg>
          <span className="absolute bottom-[-8px] right-[-8px] flex h-[20px] w-[20px] items-center justify-center rounded-full border border-[#8a9aa4] bg-[#2f3d47] text-[11px] font-semibold text-white">20</span>
        </div>
      </div>
    </div>
  );
}

export default function App() {
  return (
    <div className="flex h-[1080px] w-[1920px] flex-col overflow-hidden bg-white font-['Liberation_Sans',sans-serif]">
      {/* barra de título */}
      <div className="flex h-[23px] items-center bg-white">
        <div className="ml-[3px] flex h-[16px] w-[16px] items-center justify-center bg-[#f6dcc4] text-[13px] font-bold leading-none text-[#c8691c]">F</div>
        <span className="ml-[4px] text-[11.600px] text-[#666]">Autodesk Fusion 360 (Education License)</span>
        <div className="ml-auto flex items-center">
          <span className="h-[1px] w-[10px] bg-[#666]" />
          <svg width="11" height="11" viewBox="0 0 11 11" className="ml-[35px]">
            <path d="M.5 2.500H8.500V10.500H.5zM2.500 2.500V.5H10.500V8.500H8.500" fill="none" stroke="#666" />
          </svg>
          <svg width="11" height="11" viewBox="0 0 11 11" className="ml-[34px] mr-[21px]">
            <path d="M.5.5 10.500 10.500M10.500.5 .5 10.500" stroke="#666" />
          </svg>
        </div>
      </div>

      <TabBar />
      <Ribbon />

      {/* lienzo */}
      <div className="relative flex-1 overflow-hidden bg-white">
        <Part />
        <BrowserPanel />
        <ViewCube />
        <div className="absolute bottom-[5px] left-[4px] flex h-[25px] w-[299px] items-center border border-[#c8c8c8] bg-[#f0f0f0] pl-[24px]">
          <span className="text-[10px] text-[#666]">COMMENTS</span>
          <span className="ml-auto mr-[7px] flex h-[9px] w-[9px] items-center justify-center rounded-full bg-[#222] text-[9px] font-bold leading-none text-white">+</span>
          <PanelHandle />
        </div>
        <NavBar />
        <div className="absolute left-[1562px] top-[810px] font-['Open_Sans',sans-serif] text-[#c9c9c9]">
          <div className="text-[19px] leading-[26px]">Activar Windows</div>
          <div className="text-[14.200px] leading-[20px]">Ve a Configuración para activar Windows.</div>
        </div>
      </div>

      <Timeline />
      <Taskbar />
    </div>
  );
}
